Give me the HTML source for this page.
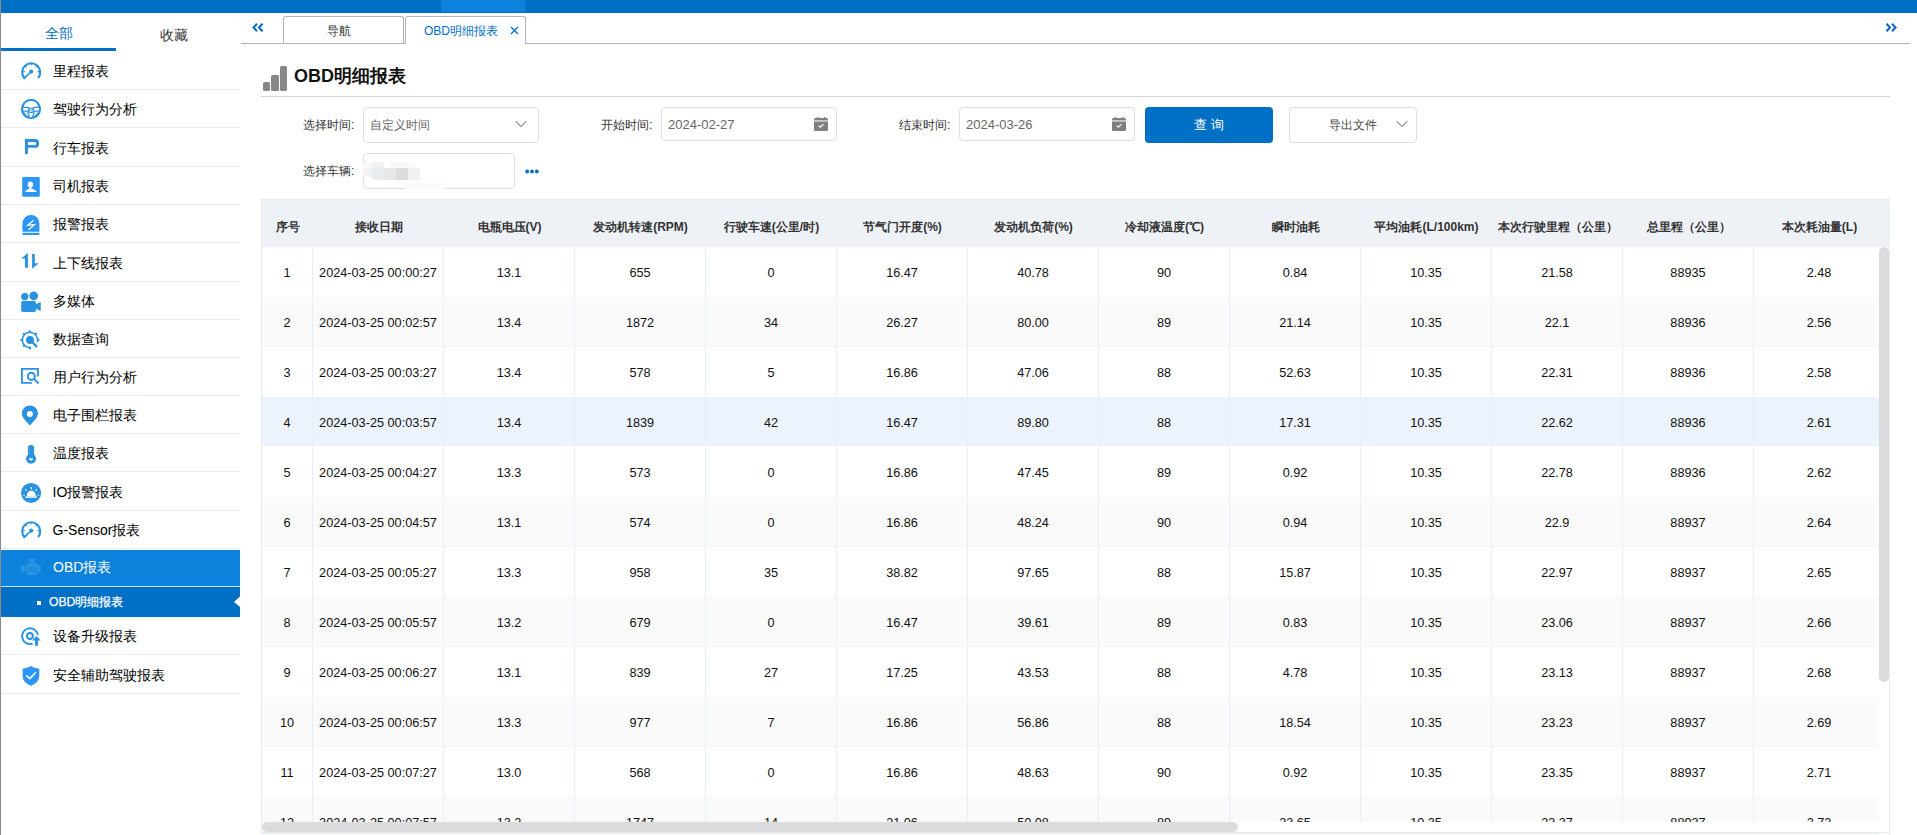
<!DOCTYPE html><html><head><meta charset="utf-8"><title>OBD明细报表</title><style>
*{box-sizing:border-box;margin:0;padding:0}
html,body{width:1917px;height:835px;overflow:hidden;background:#fff}
body{position:relative;font-family:"Liberation Sans",sans-serif;color:#222}
.abs{position:absolute}
#top{left:0;top:0;width:1917px;height:13px;background:#0070c6}
#topseg{left:441px;top:0;width:84px;height:12px;background:#0c82dc}
#lb{left:0;top:0;width:1px;height:835px;background:#8a8a8a}
.stab{position:absolute;top:22px;font-size:14px;line-height:20px;text-align:center}
.sep{position:absolute;left:1px;width:239px;height:1px;background:#ebebeb}
.mi{position:absolute;left:1px;width:239px;height:38px}
.mi svg{position:absolute;left:20px}
.mi span{position:absolute;left:51.5px;font-size:14px;line-height:20px;color:#000;white-space:nowrap}
.tab{position:absolute;top:16px;height:27px;border:1px solid #b4b4b4;border-bottom:none;border-radius:3px 3px 0 0;background:#fff;font-size:12px;line-height:28px;text-align:center}
.lbl{position:absolute;font-size:12.4px;line-height:18px;color:#333;white-space:nowrap}
.inp{position:absolute;border:1px solid #dcdfe6;border-radius:4px;background:#fff}
.inp span{position:absolute;left:7px;font-size:13px;color:#666;white-space:nowrap}
#tbl{position:absolute;left:261px;top:199px;width:1629px;height:635px;border:1px solid #e8ecf2;border-top:none;border-right:none;overflow:hidden}
table{border-collapse:separate;border-spacing:0;table-layout:fixed;position:absolute;left:0;top:0}
th{height:48px;background:#eef1f6;font-size:12px;font-weight:bold;color:#333;text-align:center;white-space:nowrap;padding:7px 0 0 0;border-top:1px solid #e4e8ef}
td{height:50px;font-size:12.7px;color:#111;text-align:center;white-space:nowrap;padding:2px 0 0 0;border-right:1px solid #e9edf4;border-bottom:1px solid #fff}
tr.g td{background:#fafafa;border-bottom-color:#f5f5f5}
tr.h td{background:#ecf3fc}
</style></head><body>

<div id="top" class="abs"></div><div id="topseg" class="abs"></div><div id="lb" class="abs"></div>
<div class="stab" style="left:1px;width:115px;color:#0070c6;top:23px">全部</div>
<div class="stab" style="left:116px;width:115px;color:#333;top:25px">收藏</div>
<div class="abs" style="left:1px;top:48px;width:115px;height:3px;background:#0070c6"></div>
<div class="mi" style="top:51px;height:38px"><span style="top:9.5px">里程报表</span></div>
<div class="mi" style="top:90px;height:37px"><span style="top:9.0px">驾驶行为分析</span></div>
<div class="mi" style="top:128px;height:38px"><span style="top:9.5px">行车报表</span></div>
<div class="mi" style="top:167px;height:37px"><span style="top:9.0px">司机报表</span></div>
<div class="mi" style="top:205px;height:37px"><span style="top:9.0px">报警报表</span></div>
<div class="mi" style="top:243px;height:38px"><span style="top:9.5px">上下线报表</span></div>
<div class="mi" style="top:282px;height:37px"><span style="top:9.0px">多媒体</span></div>
<div class="mi" style="top:320px;height:37px"><span style="top:9.0px">数据查询</span></div>
<div class="mi" style="top:358px;height:37px"><span style="top:9.0px">用户行为分析</span></div>
<div class="mi" style="top:396px;height:37px"><span style="top:9.0px">电子围栏报表</span></div>
<div class="mi" style="top:434px;height:37px"><span style="top:9.0px">温度报表</span></div>
<div class="mi" style="top:472px;height:38px"><span style="top:9.5px">IO报警报表</span></div>
<div class="mi" style="top:511px;height:37px"><span style="top:9.0px">G-Sensor报表</span></div>
<div class="sep" style="top:89px"></div>
<div class="sep" style="top:127px"></div>
<div class="sep" style="top:166px"></div>
<div class="sep" style="top:204px"></div>
<div class="sep" style="top:242px"></div>
<div class="sep" style="top:281px"></div>
<div class="sep" style="top:319px"></div>
<div class="sep" style="top:357px"></div>
<div class="sep" style="top:395px"></div>
<div class="sep" style="top:433px"></div>
<div class="sep" style="top:471px"></div>
<div class="sep" style="top:510px"></div>
<div class="sep" style="top:548px"></div>
<div class="abs" style="left:1px;top:550px;width:239px;height:36px;background:#0c82dc"></div>
<div class="abs" style="left:53px;top:557px;font-size:14px;line-height:20px;color:#fff">OBD报表</div>
<div class="abs" style="left:1px;top:586px;width:239px;height:1px;background:#c8e3fa"></div>
<div class="abs" style="left:1px;top:587px;width:239px;height:30px;background:#0070c6"></div>
<div class="abs" style="left:37px;top:601px;width:4px;height:4px;background:#fff"></div>
<div class="abs" style="left:49px;top:594px;font-size:12.2px;line-height:16px;color:#fff;-webkit-text-stroke:0.25px #fff">OBD明细报表</div>
<svg class="abs" style="left:234px;top:596px" width="6" height="12"><path d="M6 0.4 L0 6.1 L6 11Z" fill="#fff"/></svg>
<div class="mi" style="top:617px;height:37px"><span style="top:9.0px">设备升级报表</span></div>
<div class="sep" style="top:654px"></div>
<div class="mi" style="top:655px;height:38px"><span style="top:9.5px">安全辅助驾驶报表</span></div>
<div class="sep" style="top:693px"></div>
<svg class="abs" style="left:19px;top:59px" width="24" height="24" viewBox="0 0 24 24"><path d="M5.3 19.0 A9 9 0 1 1 19.1 19.0" fill="none" stroke="#2a92e3" stroke-width="2.1"/><path d="M12.20 6.30 L12.20 4.10 M5.90 12.60 L3.70 12.60 M18.50 12.60 L20.70 12.60 M7.75 8.15 L6.19 6.59 M16.65 8.15 L18.21 6.59 " stroke="#2a92e3" stroke-width="1.1"/><circle cx="12.2" cy="12.6" r="2.1" fill="#2a92e3"/><path d="M12.2 12.6 L4.6 19.2 L5.6 19.6 Z" fill="#2a92e3" stroke="#2a92e3" stroke-width="1.2" stroke-linejoin="round"/></svg>
<svg class="abs" style="left:19px;top:97px" width="24" height="24" viewBox="0 0 24 24"><circle cx="12" cy="12.1" r="9.1" fill="none" stroke="#2a92e3" stroke-width="2"/><path d="M4.2 10.3 A7.6 7.6 0 0 1 19.8 10.3" fill="none" stroke="#2a92e3" stroke-width="1.1"/><path d="M3.2 10.4 H8.8 Q9.6 10.4 9.9 11.4 L10.3 13 M20.8 10.4 H15.2 Q14.4 10.4 14.1 11.4 L13.7 13" fill="none" stroke="#2a92e3" stroke-width="1.3"/><path d="M3.3 14.2 H8.6 L10.3 20.5 M20.7 14.2 H15.4 L13.7 20.5" fill="none" stroke="#2a92e3" stroke-width="1.3"/><path d="M5 15.5 Q6.5 19 9.3 20.3 M19 15.5 Q17.5 19 14.7 20.3" fill="none" stroke="#2a92e3" stroke-width="1.1"/><circle cx="12" cy="13.3" r="2.3" fill="none" stroke="#2a92e3" stroke-width="1.2"/><circle cx="12" cy="13.3" r="0.8" fill="#2a92e3"/></svg>
<svg class="abs" style="left:19px;top:135px" width="24" height="24" viewBox="0 0 24 24"><path d="M7.45 19 V5.45 H16.2 Q18.65 5.45 18.65 8.4 Q18.65 11.4 16.2 11.4 H7.45" fill="none" stroke="#2a92e3" stroke-width="2.9"/></svg>
<svg class="abs" style="left:19px;top:174px" width="24" height="24" viewBox="0 0 24 24"><rect x="3.2" y="2.9" width="17.6" height="19.9" rx="1.4" fill="#2c96f6"/><ellipse cx="11.4" cy="10.4" rx="2.7" ry="3" fill="#fff"/><rect x="10.3" y="12" width="2.2" height="2.8" fill="#fff"/><path d="M5.9 18 Q7 15.6 9.8 14.7 H13.2 Q16.2 15.6 18.1 18 Z" fill="#fff"/></svg>
<svg class="abs" style="left:19px;top:211px" width="24" height="24" viewBox="0 0 24 24"><path d="M3.4 20.7 V12.4 A8.5 8.4 0 0 1 20.4 12.4 V20.7 Z" fill="#2c96f6"/><rect x="3.4" y="21.8" width="17" height="2.2" fill="#2c96f6"/><path d="M14.7 9.2 L8.6 14.3 L15.4 13.6 L9.5 18.7" fill="none" stroke="#fff" stroke-width="1.25" stroke-linejoin="miter"/></svg>
<svg class="abs" style="left:19px;top:251px" width="24" height="24" viewBox="0 0 24 24"><path d="M8.9 2 L2.2 7.5 L6 7.5 L6 16.8 L8.9 16.8 Z" fill="#2a92e3"/><path d="M13.1 2.9 L15.8 2.9 L15.8 12.2 L19.8 12.2 L13.1 17.8 Z" fill="#2a92e3"/></svg>
<svg class="abs" style="left:19px;top:290px" width="24" height="24" viewBox="0 0 24 24"><circle cx="5.75" cy="6.6" r="3.7" fill="#2a92e3"/><circle cx="14.7" cy="5.9" r="4.3" fill="#2a92e3"/><rect x="2.2" y="10.9" width="14.8" height="11.1" rx="1.8" fill="#2a92e3"/><path d="M16.5 14.6 L21.7 11.8 V21 L16.5 18.4Z" fill="#2a92e3"/></svg>
<svg class="abs" style="left:19px;top:328px" width="24" height="24" viewBox="0 0 24 24"><path d="M18.24 13.87 A7.6 7.6 0 1 0 12.22 19.38" fill="none" stroke="#2a92e3" stroke-width="1.5"/><circle cx="10.90" cy="3.30" r="1.1" fill="#2a92e3"/><circle cx="16.98" cy="5.82" r="1.1" fill="#2a92e3"/><circle cx="2.30" cy="11.90" r="1.1" fill="#2a92e3"/><circle cx="4.82" cy="17.98" r="1.1" fill="#2a92e3"/><circle cx="10.90" cy="20.50" r="1.1" fill="#2a92e3"/><circle cx="19.50" cy="11.90" r="1.1" fill="#2a92e3"/><circle cx="4.82" cy="5.82" r="1.1" fill="#2a92e3"/><circle cx="11" cy="11.9" r="4" fill="#2a92e3"/><path d="M13.6 14.5 L18 18.9" stroke="#2a92e3" stroke-width="2.3"/></svg>
<svg class="abs" style="left:19px;top:364px" width="24" height="24" viewBox="0 0 24 24"><path d="M12.9 18.95 H2.9 V4.95 H18.95 V12.6" fill="none" stroke="#2a92e3" stroke-width="1.8"/><circle cx="12.36" cy="12.36" r="3.55" fill="none" stroke="#2a92e3" stroke-width="2"/><path d="M14.9 14.9 L19.6 19.5" stroke="#2a92e3" stroke-width="2"/></svg>
<svg class="abs" style="left:19px;top:403px" width="24" height="24" viewBox="0 0 24 24"><path d="M10.9 22.4 L4.6 15.4 A8 8 0 1 1 17.2 15.4 Z" fill="#2a92e3"/><circle cx="10.9" cy="11.1" r="3" fill="#fff"/></svg>
<svg class="abs" style="left:19px;top:442px" width="24" height="24" viewBox="0 0 24 24"><rect x="9" y="2.9" width="6.1" height="14" rx="3" fill="#2a92e3"/><circle cx="12.05" cy="16.8" r="5" fill="#2a92e3"/><path d="M9.9 16.2 H14.1 A2.1 2.3 0 0 1 9.9 16.2Z" fill="#fff"/><rect x="10" y="6.5" width="0.9" height="2" fill="#fff" opacity=".35"/><rect x="10" y="10.5" width="0.9" height="1.8" fill="#fff" opacity=".35"/></svg>
<svg class="abs" style="left:19px;top:481px" width="24" height="24" viewBox="0 0 24 24"><circle cx="12.07" cy="11.9" r="10" fill="#2a92e3"/><path d="M7.8 15.6 Q7.8 9.8 12.2 9.8 Q16.6 9.8 16.8 15.6 Z" fill="#fff"/><rect x="6.2" y="15.5" width="11.9" height="1.3" fill="#fff"/><path d="M12.2 6 V8.4 M6.2 8.2 L7.6 9.5 M17.9 8.2 L16.4 9.5 M4.3 14.3 H5.8 M18.5 14.3 H20" stroke="#fff" stroke-width="1.1"/></svg>
<svg class="abs" style="left:19px;top:518px" width="24" height="24" viewBox="0 0 24 24"><path d="M5.3 19.0 A9 9 0 1 1 19.1 19.0" fill="none" stroke="#2a92e3" stroke-width="2.1"/><path d="M12.20 6.30 L12.20 4.10 M5.90 12.60 L3.70 12.60 M18.50 12.60 L20.70 12.60 M7.75 8.15 L6.19 6.59 M16.65 8.15 L18.21 6.59 " stroke="#2a92e3" stroke-width="1.1"/><circle cx="12.2" cy="12.6" r="2.1" fill="#2a92e3"/><path d="M12.2 12.6 L4.6 19.2 L5.6 19.6 Z" fill="#2a92e3" stroke="#2a92e3" stroke-width="1.2" stroke-linejoin="round"/></svg>
<svg class="abs" style="left:19px;top:555px" width="24" height="24" viewBox="0 0 24 24"><rect x="10" y="4" width="6" height="2.1" fill="#2a94e2"/><rect x="11.6" y="6" width="2.8" height="2.2" fill="#2a94e2"/><path d="M9.5 8 H17.4 L18.8 9.6 V18.6 L17.2 20 H9.4 L7.8 18.4 V17 H3.9 V10.8 H7.8 V9.6 Z" fill="#2a94e2"/><rect x="1.9" y="10" width="2" height="7.8" fill="#2a94e2"/><rect x="19.8" y="10" width="1.9" height="7" fill="#2a94e2"/><rect x="18.5" y="11" width="1.5" height="5" fill="#2a94e2"/><text x="11.3" y="16.7" font-size="7" font-family="Liberation Sans" font-weight="bold" fill="#0c82dc" text-anchor="middle" textLength="13.5" lengthAdjust="spacingAndGlyphs" opacity=".7">OBD</text></svg>
<svg class="abs" style="left:19px;top:625px" width="24" height="24" viewBox="0 0 24 24"><path d="M18.8 10.2 A7.9 7.9 0 1 0 13.6 18.6" fill="none" stroke="#2a92e3" stroke-width="1.9"/><circle cx="10.9" cy="10.9" r="2.95" fill="none" stroke="#2a92e3" stroke-width="2.1"/><path d="M17.4 11 L21.8 15.5 H19 V20.8 H16.1 V15.5 H13.2 Z" fill="#2a92e3"/></svg>
<svg class="abs" style="left:19px;top:664px" width="24" height="24" viewBox="0 0 24 24"><path d="M11.9 2.1 Q8.5 4.4 3.6 4.7 V11.5 Q3.6 18.5 12 21.8 Q20.3 18.5 20.3 11.5 V4.7 Q15.3 4.4 11.9 2.1 Z" fill="#2c96f6"/><path d="M7.2 11.4 L10.8 14.6 L16.8 8.3" fill="none" stroke="#fff" stroke-width="1.5"/></svg>
<div class="abs" style="left:241px;top:43px;width:1669px;height:1px;background:#b4b4b4"></div>
<svg class="abs" style="left:251.5px;top:23px" width="12" height="9" viewBox="0 0 12 9"><path d="M5 0.8 L1.5 4.5 L5 8.2 M10.5 0.8 L7 4.5 L10.5 8.2" fill="none" stroke="#0066cc" stroke-width="2"/></svg>
<svg class="abs" style="left:1885px;top:23px" width="12" height="9" viewBox="0 0 12 9"><path d="M1.5 0.8 L5 4.5 L1.5 8.2 M7 0.8 L10.5 4.5 L7 8.2" fill="none" stroke="#0066cc" stroke-width="2"/></svg>
<div class="tab" style="left:283px;width:121px;color:#333;padding-right:9px">导航</div>
<div class="tab" style="left:405px;width:121px;height:28px;color:#0070c6;text-align:left;padding-left:18px">OBD明细报表</div>
<svg class="abs" style="left:510px;top:26px" width="9" height="9" viewBox="0 0 9 9"><path d="M1 1 L8 8 M8 1 L1 8" stroke="#0070c6" stroke-width="1.3"/></svg>
<div class="abs" style="left:262.5px;top:81.5px;width:7.5px;height:9px;background:#888;border-radius:1.5px"></div>
<div class="abs" style="left:271.3px;top:74.5px;width:7.3px;height:16px;background:#888;border-radius:1.5px"></div>
<div class="abs" style="left:280.1px;top:65.5px;width:7.3px;height:25px;background:#888;border-radius:1.5px"></div>
<div class="abs" style="left:294px;top:64px;font-size:18px;line-height:24px;font-weight:bold;color:#111">OBD明细报表</div>
<div class="abs" style="left:261px;top:96px;width:1629px;height:1px;background:#d5d5d5"></div>
<div class="lbl" style="left:303px;top:116px">选择时间:</div>
<div class="inp" style="left:363px;top:107px;width:176px;height:36px"><span style="top:8px;left:6px;font-size:12px;line-height:18px">自定义时间</span></div>
<svg class="abs" style="left:515px;top:120px" width="12" height="8" viewBox="0 0 12 8"><path d="M0.8 1.2 L6 6.6 L11.2 1.2" fill="none" stroke="#555" stroke-width="1"/></svg>
<div class="lbl" style="left:601px;top:116px">开始时间:</div>
<div class="inp" style="left:661px;top:107px;width:176px;height:34px"><span style="top:8px;left:6px;line-height:18px">2024-02-27</span></div>
<div class="lbl" style="left:899px;top:116px">结束时间:</div>
<div class="inp" style="left:959px;top:107px;width:176px;height:34px"><span style="top:8px;left:6px;line-height:18px">2024-03-26</span></div>
<svg class="abs" style="left:814px;top:117px" width="14" height="14" viewBox="0 0 14 14"><rect x="0" y="1" width="14" height="13" rx="1.5" fill="#7f7f7f"/><rect x="3" y="0" width="1.2" height="2" fill="#7f7f7f"/><rect x="10" y="0" width="1.2" height="2" fill="#7f7f7f"/><rect x="0" y="3" width="14" height="1.8" fill="#c8c8c8"/><path d="M4.6 8.6 L6.3 10.2 L9.5 7.2" fill="none" stroke="#fff" stroke-width="1.1"/></svg>
<svg class="abs" style="left:1112px;top:117px" width="14" height="14" viewBox="0 0 14 14"><rect x="0" y="1" width="14" height="13" rx="1.5" fill="#7f7f7f"/><rect x="3" y="0" width="1.2" height="2" fill="#7f7f7f"/><rect x="10" y="0" width="1.2" height="2" fill="#7f7f7f"/><rect x="0" y="3" width="14" height="1.8" fill="#c8c8c8"/><path d="M4.6 8.6 L6.3 10.2 L9.5 7.2" fill="none" stroke="#fff" stroke-width="1.1"/></svg>
<div class="abs" style="left:1145px;top:107px;width:128px;height:36px;background:#0070c6;border-radius:4px;color:#fff;font-size:13px;line-height:36px;text-align:center;letter-spacing:3.5px;padding-left:3.5px">查询</div>
<div class="inp" style="left:1289px;top:107px;width:128px;height:36px"><span style="left:39px;top:8px;font-size:12px;line-height:18px;color:#444">导出文件</span></div>
<svg class="abs" style="left:1396px;top:120px" width="12" height="8" viewBox="0 0 12 8"><path d="M0.8 1.2 L6 6.6 L11.2 1.2" fill="none" stroke="#555" stroke-width="1"/></svg>
<div class="lbl" style="left:303px;top:162px">选择车辆:</div>
<div class="inp" style="left:363px;top:153px;width:152px;height:36px"></div>
<div class="abs" style="left:363px;top:162px;width:9px;height:6px;background:#f9f9f9"></div>
<div class="abs" style="left:372px;top:162px;width:12px;height:6px;background:#f1f1f1"></div>
<div class="abs" style="left:390px;top:162px;width:18px;height:6px;background:#f8f8f8"></div>
<div class="abs" style="left:408px;top:163px;width:8px;height:5px;background:#fbfbfb"></div>
<div class="abs" style="left:363px;top:168px;width:9px;height:9px;background:#f3f2f0"></div>
<div class="abs" style="left:372px;top:168px;width:12px;height:12px;background:#e9ecef"></div>
<div class="abs" style="left:384px;top:168px;width:12px;height:12px;background:#e8e7e5"></div>
<div class="abs" style="left:396px;top:168px;width:12px;height:12px;background:#dcdddf"></div>
<div class="abs" style="left:408px;top:168px;width:12px;height:12px;background:#f1f1f1"></div>
<div class="abs" style="left:384px;top:180px;width:39px;height:3px;background:#fcfcfc"></div>
<div class="abs" style="left:405px;top:183px;width:40px;height:6px;background:#fafafa"></div>
<svg class="abs" style="left:525px;top:168.5px" width="14" height="5" viewBox="0 0 14 5"><circle cx="2.2" cy="2.5" r="1.9" fill="#0070c6"/><circle cx="7" cy="2.5" r="1.9" fill="#0070c6"/><circle cx="11.8" cy="2.5" r="1.9" fill="#0070c6"/></svg>
<div id="tbl">
<table style="width:1623px">
<colgroup><col style="width:51px"><col style="width:131px"><col style="width:131px"><col style="width:131px"><col style="width:131px"><col style="width:131px"><col style="width:131px"><col style="width:131px"><col style="width:131px"><col style="width:131px"><col style="width:131px"><col style="width:131px"><col style="width:131px"></colgroup>
<tr><th>序号</th><th>接收日期</th><th>电瓶电压(V)</th><th>发动机转速(RPM)</th><th>行驶车速(公里/时)</th><th>节气门开度(%)</th><th>发动机负荷(%)</th><th>冷却液温度(℃)</th><th>瞬时油耗</th><th>平均油耗(L/100km)</th><th>本次行驶里程（公里）</th><th>总里程（公里）</th><th>本次耗油量(L)</th></tr>
<tr class=""><td>1</td><td>2024-03-25 00:00:27</td><td>13.1</td><td>655</td><td>0</td><td>16.47</td><td>40.78</td><td>90</td><td>0.84</td><td>10.35</td><td>21.58</td><td>88935</td><td>2.48</td></tr>
<tr class="g"><td>2</td><td>2024-03-25 00:02:57</td><td>13.4</td><td>1872</td><td>34</td><td>26.27</td><td>80.00</td><td>89</td><td>21.14</td><td>10.35</td><td>22.1</td><td>88936</td><td>2.56</td></tr>
<tr class=""><td>3</td><td>2024-03-25 00:03:27</td><td>13.4</td><td>578</td><td>5</td><td>16.86</td><td>47.06</td><td>88</td><td>52.63</td><td>10.35</td><td>22.31</td><td>88936</td><td>2.58</td></tr>
<tr class="h"><td>4</td><td>2024-03-25 00:03:57</td><td>13.4</td><td>1839</td><td>42</td><td>16.47</td><td>89.80</td><td>88</td><td>17.31</td><td>10.35</td><td>22.62</td><td>88936</td><td>2.61</td></tr>
<tr class=""><td>5</td><td>2024-03-25 00:04:27</td><td>13.3</td><td>573</td><td>0</td><td>16.86</td><td>47.45</td><td>89</td><td>0.92</td><td>10.35</td><td>22.78</td><td>88936</td><td>2.62</td></tr>
<tr class="g"><td>6</td><td>2024-03-25 00:04:57</td><td>13.1</td><td>574</td><td>0</td><td>16.86</td><td>48.24</td><td>90</td><td>0.94</td><td>10.35</td><td>22.9</td><td>88937</td><td>2.64</td></tr>
<tr class=""><td>7</td><td>2024-03-25 00:05:27</td><td>13.3</td><td>958</td><td>35</td><td>38.82</td><td>97.65</td><td>88</td><td>15.87</td><td>10.35</td><td>22.97</td><td>88937</td><td>2.65</td></tr>
<tr class="g"><td>8</td><td>2024-03-25 00:05:57</td><td>13.2</td><td>679</td><td>0</td><td>16.47</td><td>39.61</td><td>89</td><td>0.83</td><td>10.35</td><td>23.06</td><td>88937</td><td>2.66</td></tr>
<tr class=""><td>9</td><td>2024-03-25 00:06:27</td><td>13.1</td><td>839</td><td>27</td><td>17.25</td><td>43.53</td><td>88</td><td>4.78</td><td>10.35</td><td>23.13</td><td>88937</td><td>2.68</td></tr>
<tr class="g"><td>10</td><td>2024-03-25 00:06:57</td><td>13.3</td><td>977</td><td>7</td><td>16.86</td><td>56.86</td><td>88</td><td>18.54</td><td>10.35</td><td>23.23</td><td>88937</td><td>2.69</td></tr>
<tr class=""><td>11</td><td>2024-03-25 00:07:27</td><td>13.0</td><td>568</td><td>0</td><td>16.86</td><td>48.63</td><td>90</td><td>0.92</td><td>10.35</td><td>23.35</td><td>88937</td><td>2.71</td></tr>
<tr class="g"><td>12</td><td>2024-03-25 00:07:57</td><td>13.2</td><td>1747</td><td>14</td><td>21.06</td><td>50.08</td><td>89</td><td>23.65</td><td>10.35</td><td>23.37</td><td>88937</td><td>2.72</td></tr>
</table>
</div>
<div class="abs" style="left:1884px;top:199px;width:6px;height:48px;background:#eef1f6;border-top:1px solid #e4e8ef"></div>
<div class="abs" style="left:1879px;top:247px;width:11px;height:588px;background:#fff"></div>
<div class="abs" style="left:1879px;top:247px;width:10px;height:435px;background:#dcdcde;border-radius:5px"></div>
<div class="abs" style="left:1889px;top:247px;width:1px;height:588px;background:#e8ecf2"></div>
<div class="abs" style="left:262px;top:822px;width:1617px;height:10px;background:#fff"></div>
<div class="abs" style="left:262px;top:822px;width:976px;height:10px;background:#dcdcde;border-radius:5px"></div>
<div class="abs" style="left:261px;top:832px;width:1629px;height:1px;background:#e8ecf2"></div>
</body></html>
